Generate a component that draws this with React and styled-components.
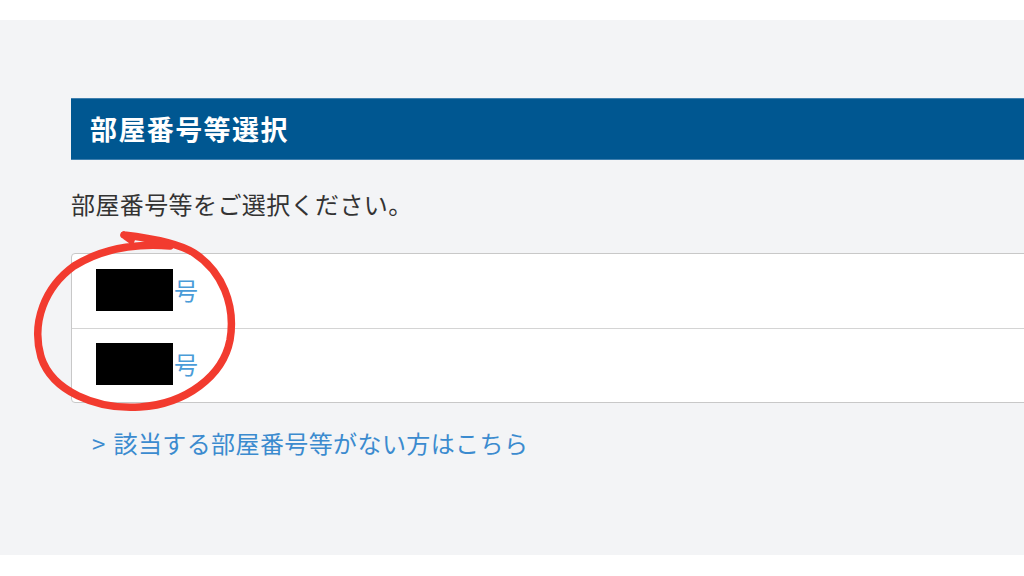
import React from 'react';
import styled, { createGlobalStyle } from 'styled-components';

const rooms = [{ id: 1, label: '号' }, { id: 2, label: '号' }];

const App = () => {
  return (
    <Page>
      <GlobalStyle />
      <Panel>
        <SectionHeader>部屋番号等選択</SectionHeader>
        <Lead>部屋番号等をご選択ください。</Lead>
        <RoomList>
          {rooms.map((room) => (
            <RoomRow key={room.id}>
              <Redacted />
              <RoomLabel>{room.label}</RoomLabel>
            </RoomRow>
          ))}
        </RoomList>
        <OtherLink href="#">&gt; 該当する部屋番号等がない方はこちら</OtherLink>
      </Panel>
      {/* hand drawn annotation on top of the screenshot */}
      <Annotation viewBox="0 0 1024 576">
        <path
          d="M124 235 L131 240 M124 235 C150 238 178 243 194 253 C222 271 236 305 230 340 C223 376 186 404 140 407 C96 410 52 391 41 357 C31 322 45 287 74 266 C100 250 132 243 170 246"
          fill="none"
          stroke="#f23b2f"
          strokeWidth="7.5"
          strokeLinecap="round"
        />
      </Annotation>
    </Page>
  );
};

const GlobalStyle = createGlobalStyle`
  html, body {
    margin: 0;
    padding: 0;
    background: #ffffff;
    overflow: hidden;
  }
  body {
    font-family: "Noto Sans CJK JP", "Noto Sans", sans-serif;
  }
`;

const Page = styled.div`
  position: relative;
  width: 1024px;
  height: 576px;
  padding-top: 20px;
  box-sizing: border-box;
  overflow: hidden;
`;

const Panel = styled.div`
  height: 535px;
  background: #f3f4f6;
  padding: 78px 0 0 71px;
  box-sizing: border-box;
  display: flex;
  flex-direction: column;
`;

const SectionHeader = styled.h2`
  margin: 0 -4px 0 0;
  height: 62px;
  line-height: 60px;
  padding-left: 19px;
  background: #005791;
  color: #ffffff;
  font-size: 27px;
  font-weight: 700;
  letter-spacing: 1.4px;
  border-top: 1px solid #3f7fae;
  border-bottom: 1px solid #3f7fae;
  box-sizing: border-box;
`;

const Lead = styled.p`
  margin: 26px 0 0;
  font-size: 24px;
  line-height: 36px;
  letter-spacing: 0.4px;
  color: #333333;
`;

const RoomList = styled.ul`
  list-style: none;
  margin: 31px -4px 0 0;
  padding: 0;
  background: #ffffff;
  border: 1.5px solid #c8c8c8;
  border-radius: 4px;
`;

const RoomRow = styled.li`
  display: flex;
  align-items: center;
  height: 74px;
  padding-left: 24px;
  padding-bottom: 3px;
  box-sizing: border-box;
  & + & {
    border-top: 1.5px solid #d4d4d4;
  }
`;

const Redacted = styled.span`
  display: block;
  width: 77px;
  height: 42px;
  background: #000000;
`;

const RoomLabel = styled.span`
  font-size: 24px;
  line-height: 1;
  color: #4a9cd8;
  margin-left: 1px;
`;

const OtherLink = styled.a`
  margin: 22px 0 0 21px;
  font-size: 24px;
  line-height: 36px;
  letter-spacing: 0.4px;
  word-spacing: 2px;
  color: #3b8bcf;
  text-decoration: none;
`;

const Annotation = styled.svg`
  position: absolute;
  top: 0;
  left: 0;
  width: 1024px;
  height: 576px;
  pointer-events: none;
`;

export default App;
